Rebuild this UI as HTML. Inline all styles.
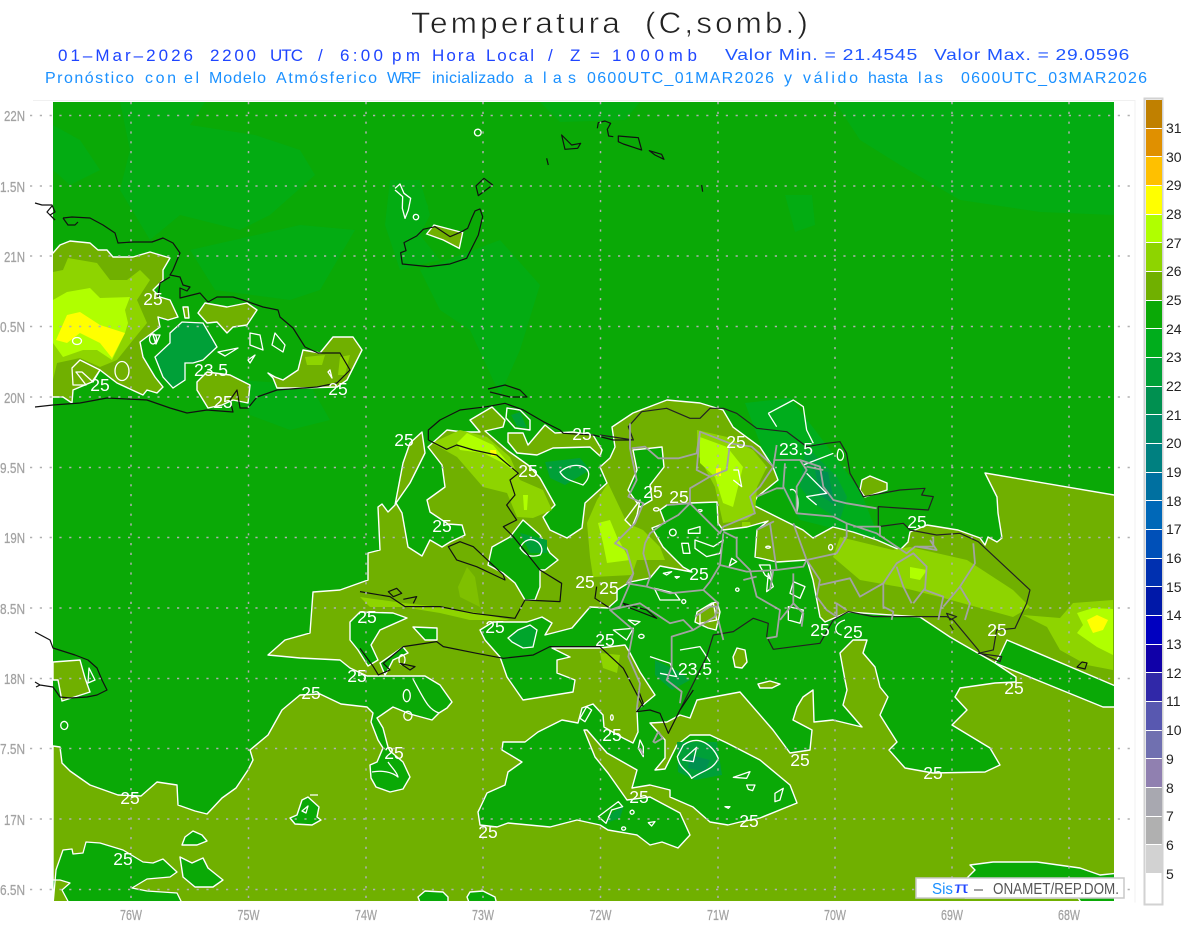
<!DOCTYPE html>
<html>
<head>
<meta charset="utf-8">
<title>Temperatura</title>
<style>
html,body{margin:0;padding:0;background:#fff}
svg{display:block}
text{font-family:"Liberation Sans",sans-serif}
.w{fill:none;stroke:#fff;stroke-width:1.3;stroke-linejoin:round}
.wz{fill:none;stroke:#fff;stroke-width:3.9;stroke-linejoin:round}
.o{fill:#70b000;stroke:#fff;stroke-width:1.4;stroke-linejoin:round}
.g{fill:#0aa906;stroke:#fff;stroke-width:1.4;stroke-linejoin:round}
.k{fill:none;stroke:#111;stroke-width:1.2;stroke-linejoin:round}
.kz{fill:none;stroke:#111;stroke-width:3.6;stroke-linejoin:round}
.gz{fill:none;stroke:#a3a3a3;stroke-width:5.4;stroke-linejoin:round}
.ax{fill:#a2a2a2;font-size:15px;stroke:#a2a2a2;stroke-width:.25px}
.lb{fill:#fff;font-size:17.5px;text-anchor:middle}
.cb{fill:#222;font-size:14px}
.t{font-size:30px;fill:#222;stroke:#fff;stroke-width:.55px;letter-spacing:3px}
.l2{font-size:17px;fill:#1f45ff}
.l2b{font-size:16px;fill:#1f55ff;letter-spacing:.6px}
.l3{font-size:16px;fill:#1a90ff}
</style>
</head>
<body>
<svg width="1200" height="927" viewBox="0 0 1200 927" xmlns="http://www.w3.org/2000/svg">
<defs><clipPath id="m"><rect x="53" y="102" width="1061" height="799"/></clipPath></defs>
<rect width="1200" height="927" fill="#fff"/>

<text class="t" x="411" y="33" textLength="212" lengthAdjust="spacingAndGlyphs">Temperatura</text>
<text class="t" x="645" y="33" textLength="166" lengthAdjust="spacingAndGlyphs">(C,somb.)</text>

<text class="l2" x="58" y="61" textLength="135">01–Mar–2026</text>
<text class="l2" x="210" y="61" textLength="46">2200</text>
<text class="l2" x="270" y="61" textLength="33">UTC</text>
<text class="l2" x="318" y="61">/</text>
<text class="l2" x="340" y="61" textLength="43">6:00</text>
<text class="l2" x="392" y="61" textLength="28">pm</text>
<text class="l2" x="432" y="61" textLength="43">Hora</text>
<text class="l2" x="486" y="61" textLength="48">Local</text>
<text class="l2" x="548" y="61">/</text>
<text class="l2" x="570" y="61">Z</text>
<text class="l2" x="590" y="61">=</text>
<text class="l2" x="612" y="61" textLength="85">1000mb</text>
<text class="l2b" x="725" y="60" textLength="193" lengthAdjust="spacingAndGlyphs">Valor Min. = 21.4545</text>
<text class="l2b" x="934" y="60" textLength="196" lengthAdjust="spacingAndGlyphs">Valor Max. = 29.0596</text>

<text class="l3" x="45" y="83" textLength="89">Pronóstico</text>
<text class="l3" x="145" y="83" textLength="31">con</text>
<text class="l3" x="184" y="83" textLength="15">el</text>
<text class="l3" x="209" y="83" textLength="57">Modelo</text>
<text class="l3" x="276" y="83" textLength="101">Atmósferico</text>
<text class="l3" x="387" y="83" textLength="34">WRF</text>
<text class="l3" x="432" y="83" textLength="82">inicializado</text>
<text class="l3" x="524" y="83">a</text>
<text class="l3" x="543" y="83" textLength="33">las</text>
<text class="l3" x="587" y="83" textLength="187">0600UTC_01MAR2026</text>
<text class="l3" x="784" y="83">y</text>
<text class="l3" x="803" y="83" textLength="55">válido</text>
<text class="l3" x="868" y="83" textLength="40">hasta</text>
<text class="l3" x="918" y="83" textLength="25">las</text>
<text class="l3" x="961" y="83" textLength="186">0600UTC_03MAR2026</text>

<path d="M33,100.5H1135V902.5" fill="none" stroke="#f0f0f0"/>

<g clip-path="url(#m)">
<rect x="53" y="102" width="1061" height="799" fill="#0aa906"/>
<!-- subtle lighter sea patches -->
<g fill="#03ac12">
<path d="M120,102L205,102 190,125 255,135 300,150 315,175 270,215 240,230 180,215 150,240 120,190 130,150Z"/>
<path d="M53,125L80,140 100,170 70,185 53,170Z"/>
<path d="M835,102L1114,102 1114,215 1040,212 960,200 900,165 860,140Z"/>
<path d="M390,180L420,180 430,215 420,235 440,260 400,270 385,225Z"/>
<path d="M420,270L500,240 540,285 520,350 500,395 470,330 440,310Z"/>
<path d="M240,380L310,385 330,420 290,430 250,415Z"/>
<path d="M190,250L300,225 355,230 320,290 290,300 215,290Z"/>
<path d="M640,420L690,400 725,430 700,445 650,445Z"/>
<path d="M785,195L812,195 815,225 795,232Z"/>
<path d="M540,102L640,102 625,120 560,122Z"/>
</g>
<path d="M745,403L790,398 815,430 830,450 860,490 880,540 800,520 770,470Z" fill="#00ad1c"/>

<!-- main olive envelope -->
<path class="o" d="M53,910L53,746 60,747 62,763 70,771 90,785 118,795 141,796 157,782 177,785 178,805 195,811 207,814 222,798 236,788 248,770 253,760 250,750 268,735 282,710 300,695 320,694 341,704 367,707 373,713 371,722 378,740 383,748 377,762 370,765 371,778 376,787 390,792 403,789 410,777 403,762 390,751 388,747 383,728 377,718 393,707 410,714 432,720 439,713 447,708 452,702 440,685 425,676 367,676 350,668 340,660 300,658 268,655 285,640 310,633 313,592 340,590 368,580 368,553 380,550 378,507 382,504 388,512 395,505 403,463 410,443 422,432 425,453 410,483 396,503 402,513 408,547 422,556 430,540 442,547 450,542 465,535 462,525 448,524 430,512 427,500 445,487 442,465 428,447 447,430 463,432 480,432 470,420 492,407 505,420 503,427 485,431 507,450 528,465 540,478 555,505 543,517 550,530 567,538 582,528 585,503 607,483 600,467 610,458 615,447 612,427 633,413 667,400 700,403 723,410 733,427 760,447 773,467 778,480 757,497 753,505 777,517 803,530 813,538 833,527 853,532 877,540 900,550 908,542 910,532 927,525 958,530 980,538 985,545 988,537 997,542 1002,538 998,513 997,497 985,473 1120,496 1120,910Z"/>
<path class="o" d="M508,433L523,433 528,445 545,425 555,433 573,432 593,435 602,450 600,456 590,447 553,448 537,455 517,453 508,442Z"/>
<path class="o" d="M862,480L870,476 887,483 887,490 865,497 860,490Z"/>
<path class="o" d="M53,662L80,660 85,678 90,692 62,701 58,680 53,680Z"/>

<!-- south sea green islands, bottom edge -->
<path class="g" d="M53,905L56,870 57,867 63,850 72,849 73,854 83,853 86,842 100,843 123,850 143,862 153,863 163,859 177,872 170,877 147,879 132,888 147,891 177,893 183,905 70,905 62,890 70,883 60,880 53,880Z" style="stroke-width:1.3"/>
<path class="g" d="M182,845L185,837 193,831 202,835 207,841 197,845Z"/>
<path class="g" d="M180,857L192,863 203,858 208,868 223,880 213,887 195,887 183,877Z"/>
<path class="g" d="M418,897L425,891 443,892 448,897 448,905 421,905Z"/>
<path class="g" d="M467,897L470,892 483,891 495,897 497,905 470,905Z"/>
<path class="g" d="M965,880L975,870 970,865 993,862 1037,862 1080,868 1100,875 1120,873 1120,905 1083,905 1078,898 965,898Z"/>

<!-- Cuba -->
<path class="o" d="M45,255L53,253 60,245 70,241 90,243 98,250 107,250 113,257 133,257 150,252 170,258 163,270 163,280 153,290 160,297 170,300 178,317 168,320 158,317 160,327 140,342 143,357 155,377 163,387 157,393 147,390 143,395 117,383 100,370 92,382 73,390 72,403 63,397 45,397Z"/>
<path fill="#8ed400" d="M53,272L63,270 68,258 97,263 110,280 127,280 140,270 150,280 137,300 147,323 133,340 117,360 100,367 80,358 57,363 53,380Z"/>
<path fill="#b0ff00" d="M53,300L67,292 90,288 100,298 130,297 125,310 128,323 125,333 112,360 97,350 83,350 63,357 53,343Z"/>
<path fill="#ffff00" d="M56,340L67,315 80,312 100,325 125,333 112,358 100,343 80,333 67,343Z"/>
<path class="w" d="M72,368L80,360 100,370 93,382 82,372 76,372 86,385 73,385Z"/>
<ellipse class="w" cx="122" cy="371" rx="7" ry="9.5"/>
<ellipse class="w" cx="77" cy="341" rx="4.5" ry="3.5"/>
<path class="o" d="M198,313L205,303 227,307 247,303 257,310 247,325 233,327 227,333 217,322 207,323Z"/>
<path class="o" d="M197,382L207,372 230,375 250,385 248,403 233,400 222,405 208,408 197,390Z"/>
<path class="o" d="M268,373L275,377 283,380 298,370 303,350 320,353 333,337 353,337 362,350 347,380 337,387 300,388 277,388 273,378Z"/>
<path fill="#8ed400" d="M305,357L325,355 322,365 307,365Z M340,357L350,355 345,375 338,375Z"/>
<path class="o" d="M183,307L188,307 189,318 185,318Z"/>
<path d="M170,333L182,322 203,323 213,340 217,347 203,360 193,363 185,363 185,380 173,388 163,377 155,357 170,343Z" fill="#00a038" stroke="#fff" stroke-width="1.3"/>
<path class="w" d="M153,335L160,335 156,344Z M250,333L260,335 263,350 250,345Z M275,333L285,345 283,352 272,345Z M248,360L255,355 250,363Z M218,352L238,348 225,356Z M330,370L332,378 328,372Z"/>
<ellipse class="w" cx="153" cy="339" rx="3.5" ry="5"/>

<!-- bright land zones -->
<path fill="#8ed400" d="M432,443L460,430 487,437 510,457 520,480 543,490 552,510 533,518 517,517 507,493 483,487 457,457Z"/>
<path fill="#b0ff00" d="M457,443L467,433 493,445 517,473 503,463 483,453 460,450Z M523,495L528,495 527,510 524,510Z"/>
<path fill="#ffff00" d="M490,450L496,450 497,456 491,456Z"/>
<path fill="#8ed400" d="M587,523L597,500 608,483 627,523 643,530 660,547 665,560 637,560 632,575 593,577 590,557Z"/>
<path fill="#b0ff00" d="M598,523L610,520 617,537 630,560 607,563 603,543Z"/>
<path fill="#8ed400" d="M697,430L727,437 753,450 767,467 757,487 755,513 747,520 723,523 715,487 697,453Z"/>
<path fill="#b0ff00" d="M700,437L727,447 743,467 733,507 723,503 715,477 700,463Z"/>
<path fill="#ffff00" d="M716,468L721,468 721,476 716,476Z"/>
<path fill="#8ed400" d="M833,557L840,537 893,550 910,547 967,560 1013,590 1030,607 1013,617 940,597 900,587 860,580Z"/>
<path fill="#b0ff00" d="M910,567L927,570 920,580 910,578Z"/>
<path fill="#8ed400" d="M1023,615L1060,618 1073,603 1113,600 1113,670 1087,665 1060,650 1047,627Z"/>
<path fill="#b0ff00" d="M1077,613L1093,608 1113,609 1113,655 1097,647 1077,633 1083,625Z"/>
<path fill="#ffff00" d="M1087,620L1097,615 1108,620 1103,630 1093,633 1090,627Z"/>
<path fill="#7fc000" d="M458,587L467,567 475,577 480,607 460,597Z"/>
<path fill="#8ed400" d="M360,597L403,603 440,607 473,612 510,620 470,620 440,613 403,607 370,607Z"/>
<path fill="#8ed400" d="M600,653L620,655 617,673 603,668Z M737,607L745,607 747,617 737,617Z M742,522L750,522 752,530 742,530Z"/>

<!-- green pockets -->
<path class="g" d="M633,450L662,447 664,467 650,485 652,500 640,507 628,490 637,470Z"/>
<path class="g" d="M507,408L520,410 530,420 530,430 515,428 506,418Z"/>
<path class="g" d="M1007,640L1125,690 1125,707 1103,707 995,663 1000,655Z"/>
<path class="g" d="M350,622L360,612 393,613 407,618 380,630 371,645 378,660 368,666 358,650 350,640Z"/>
<path class="g" d="M380,663L403,647 408,653 393,660 388,670 385,675Z"/>
<path class="g" d="M413,627L437,628 437,640 425,640Z"/>
<path class="g" d="M488,565L492,547 510,537 523,520 540,535 550,553 558,560 545,570 540,570 540,587 535,600 525,600 515,583 503,573Z"/>
<path class="g" d="M667,505L690,503 717,502 718,523 723,530 747,527 768,521 757,530 755,557 777,562 807,560 813,580 820,617 825,622 848,612 920,617 950,637 995,663 1016,677 1016,682 995,683 960,688 955,697 967,710 952,725 990,748 1000,765 985,772 933,773 905,768 889,750 897,742 880,715 888,697 880,687 875,667 863,653 867,640 853,640 840,653 845,680 847,690 843,705 862,727 833,720 814,722 813,690 803,697 797,707 793,720 812,730 810,750 790,753 773,730 740,692 697,700 690,718 680,715 667,722 650,723 665,740 665,758 655,770 665,769 677,745 690,735 710,735 727,743 760,760 790,785 797,803 760,818 740,822 728,825 710,822 693,807 670,797 670,790 650,785 632,788 637,770 607,753 587,730 584,730 595,757 608,773 627,800 650,797 680,813 690,835 678,848 662,842 650,845 637,835 608,830 600,825 577,820 550,827 508,823 497,827 480,825 478,812 480,808 487,793 505,785 508,772 522,762 502,750 503,742 525,742 538,732 562,720 578,723 582,708 593,704 603,715 604,727 623,738 633,743 638,732 637,710 655,695 640,672 630,653 625,645 600,648 552,648 570,657 557,660 557,673 575,680 573,692 523,700 507,677 500,657 485,640 480,630 493,622 527,622 542,617 552,623 545,635 572,628 590,607 608,608 617,600 617,590 630,582 650,578 660,566 692,572 683,567 663,547 652,528 665,523 660,510Z"/>

<!-- islands of olive inside green -->
<path class="o" d="M733,657L737,648 745,650 747,662 742,668 735,667Z"/>
<path class="o" d="M758,684L770,681 780,684 772,688 760,688Z"/>
<path class="o" d="M712,603L717,602 720,612 716,630 708,628 695,622 697,612Z"/>
<path class="g" d="M290,818L297,815 302,800 308,797 319,807 317,817 321,820 312,825 295,824Z"/>

<!-- darker zones -->
<g fill="#00a038">
<path d="M805,450L813,453 837,477 847,497 840,520 813,503 800,487Z"/>
<path d="M655,660L680,672 690,680 672,690 655,675Z"/>
<path d="M677,742L717,742 722,775 695,780 678,772Z"/>
<path d="M545,462L580,458 590,470 565,485 550,478Z"/>
<path d="M520,533L547,540 547,553 530,553Z"/>
<path d="M609,815L624,805 620,818 606,823Z"/>
<path d="M511,415L520,412 527,428 517,426Z"/>
</g>
<path d="M508,638L518,630 530,625 537,630 533,647 523,648 512,642Z" fill="#00a52c" stroke="#fff" stroke-width="1.3"/>
<g fill="#009050"><path d="M815,470L828,472 835,505 820,495Z"/><path d="M690,755L710,760 705,772 688,768Z"/></g>

<!-- small white loops: scale of zoom 7 -->
<g transform="translate(600,390) scale(.3333)">
<path class="wz" d="M505,70L580,30 610,50 620,120 640,160 M505,70L530,110 M715,180C720,170 740,195 725,210C710,215 710,195 715,180 M610,225L700,190 M570,300C590,290 600,330 590,370 M620,250L680,310 620,320 650,345"/>
<path class="wz" d="M225,420a10,10 0 1 0 1,1Z M265,420L300,410 300,430 265,430Z M245,460L265,460 270,490 250,490Z M285,450L340,470 370,450 360,490 320,500 285,475Z M190,550L215,545 200,555Z M225,560L238,560 230,565Z M415,595a5,5 0 1 0 1,1Z M395,505L410,515 388,528Z M478,525L510,525 515,570 495,555Z M505,550L520,590 500,605 Z M580,575L615,590 600,625 570,610Z M565,650L610,660 600,700 565,690Z M163,595L225,610 240,630 180,630Z M255,630a6,6 0 1 0 1,1Z M300,670L340,640 350,690 300,700Z M85,690L120,695 105,705Z M130,735a8,6 0 1 0 1,1Z M40,720L100,715 80,750Z M150,800L210,820 230,860 180,850 M240,780L300,770 330,815 M305,360a6,3 0 1 0 1,1Z M175,355a8,5 0 1 0 1,1Z M695,465a6,8 0 1 0 1,1Z M735,690C700,700 700,730 725,735 M510,470a7,3 0 1 0 1,1Z M400,240L415,240 425,290 400,270"/>
</g>
<g transform="translate(480,690) scale(.3333)">
<path class="wz" d="M300,85L320,50 335,60 315,95Z M397,75a4,8 0 1 0 1,1Z M480,150L490,170 490,200 475,175Z M610,165C660,130 700,170 715,205 700,240 670,240 635,265 625,240 600,240 592,200Z M608,210L650,172 640,215Z M760,262L810,245 800,265Z M800,285L825,285 818,302 805,298Z M885,335L885,310 910,295 900,330Z M355,380L415,335 428,350 395,360 378,400Z M460,362a6,6 0 1 0 1,1Z M435,412a6,5 0 1 0 1,1Z M505,398L525,395 515,408Z M735,350L750,350 745,355Z"/>
</g>
<path class="w" d="M388,762C392,768 397,772 398,777 392,772 382,770 372,772"/>
<path class="w" d="M413,679C420,692 424,700 428,705 432,710 436,712 439,713"/>
<path class="w" d="M403,655a3,5 0 1 0 1,1Z M408,690a3.5,6 0 1 0 1,1Z M410,712a4,4.5 0 1 0 1,1Z M66,722a3.5,4 0 1 0 1,1Z M89,668L95,680 88,683Z M310,795h8"/>
<path class="w" d="M302,811L308,806 306,813Z M520,548C528,530 548,545 540,555 530,558 525,555 520,548Z M560,472C575,458 600,468 583,485 570,480 565,480 560,472Z"/>
<path class="o" d="M625,520L640,500 637,515 632,527Z"/>

<!-- northern loops -->
<g transform="translate(390,110) scale(.3333)">
<path d="M0,230L30,215 90,235 115,290 100,340 50,335 0,290Z" fill="#03ac12"/>
<path d="M110,372L132,345 218,368 208,415 160,390Z" fill="#70b000" stroke="#fff" stroke-width="4"/>
<path class="wz" d="M15,235L30,222 42,250 62,265 55,300 45,325 37,295 38,260 15,240 M83,315a8,8 0 1 0 1,1Z M270,60a10,10 0 1 0 1,1Z"/>
</g>
</g>

<!-- black coasts -->
<g class="k">
<path d="M35,203L42,205 52,205 55,212 50,215 55,220 M63,218L72,217 90,218 103,225 115,233 118,243 133,242 152,242 163,238 173,243 180,253 173,270 170,275 180,277 183,285 190,287 187,291 180,288 180,298 200,293 208,302 217,297 233,297 243,300 263,307 278,310 280,317 293,328 305,347 318,353 340,353 350,370 337,383 317,387 277,390 257,397 248,408 240,408 237,390 230,400 233,412 207,410 187,413 170,408 147,400 107,398 80,403 53,405 35,407"/>
<path d="M158,297L160,283 170,277 M63,218L68,225 75,225 78,222 M52,206L47,212 55,220"/>
<path d="M35,632L50,640 53,648 75,655 88,660 97,668 102,680 107,690 97,695 87,697 70,698 60,697 53,687 40,685 36,687 M35,682L40,685"/>
<path d="M488,389L505,385 520,390 527,397 510,397 490,392"/>
<path d="M1077,667L1082,662 1087,663 1085,669Z"/>
</g>
<g transform="translate(390,110) scale(.3333)" class="kz">
<path d="M622,55L625,38 645,33 662,40 652,58 656,78 670,80 M515,75L545,105 572,100 563,115 525,118Z M685,78L745,83 755,120 700,102 685,95Z M778,122L815,133 822,148 795,135Z M470,145L475,165 M935,225L938,245 M258,228L282,205 308,225 265,257Z M270,297L278,320 265,375 230,445 180,462 115,470 37,462 32,428 48,422 42,398 80,378 100,358 135,350 180,380 215,365 233,355 245,325 255,303Z"/>
</g>
<g transform="translate(360,390) scale(.3333)" class="kz">
<path d="M205,150L205,120 240,90 300,60 380,50 435,40 490,60 550,95 600,120 610,130 700,135 760,150 815,150 M205,150L260,178 290,165 340,180 410,195 475,250 450,270 465,315 440,345 470,390 430,410 460,440 540,540 605,580 600,635 495,630 465,685 340,670 240,650 135,650 90,620 0,605 M265,470L300,455 340,470 430,555 435,570 350,530 290,510Z M85,605L110,595 125,610 100,620Z M710,590L705,625 750,655 M790,640L860,660 890,685 800,650Z M130,628L170,620 160,640 M850,950L790,835 720,770 570,770 520,795 430,805 350,790 250,770 230,755 130,770 70,820 90,840 55,855 40,830 0,775 M120,820L165,830 150,840Z"/>
</g>
<g transform="translate(600,390) scale(.3333)" class="kz" style="stroke:#222">
<path d="M0,135L100,150 85,110 125,65 200,55 270,85 300,85 330,55 370,55 410,70 470,115 560,125 620,170 680,160 720,155 740,190 750,250 790,320 900,300 975,295 965,315 1000,320 985,360 835,350 835,410 910,400 930,420 1010,435 1080,430 1135,455 1290,600 1280,640 1245,715 1190,720 1180,780 1135,790 1205,800 1200,815 1140,790 1135,780 1060,690 1040,680 960,680 880,680 820,680 745,665 700,690 660,760 520,778 500,740 505,700 460,685 400,725 340,735 320,800 240,960 M1040,670L1070,680 1050,690Z M1050,705L1060,720"/>
</g>
<g transform="translate(480,690) scale(.3333)" class="kz">
<path d="M640,0L600,60 565,130 540,70 510,60 470,65 490,40 475,0"/>
</g>

<!-- gray borders -->
<g transform="translate(600,390) scale(.3333)" class="gz">
<path d="M90,100L90,175 110,270 85,320 130,340 105,400 45,460 80,480 100,550 90,580 60,650 30,660 100,720 85,800 120,880 110,960"/>
<path d="M95,175L135,170 175,205 235,205 290,190 300,125 290,240 330,260 270,295 270,340 200,345"/>
<path d="M300,125L390,160 380,240 355,250 330,260"/>
<path d="M390,160L455,170 500,210 520,230 480,290 450,320 465,370 370,410 360,430 270,340"/>
<path d="M520,230L530,165 M520,210L600,210 660,230 670,290 700,330 740,340 830,355"/>
<path d="M555,220L550,290 590,370 700,380 740,400 740,440 710,490 620,510 580,400"/>
<path d="M600,210L620,240 590,290 590,370 M470,320L530,295 550,295 M620,230L670,240"/>
<path d="M740,400L830,430 920,490 945,470 1000,470 1000,440 M760,410L840,410 840,440"/>
<path d="M620,510L610,530 530,540 510,400 520,395 470,420"/>
<path d="M370,425L410,445 410,500 450,540 470,620 540,660 530,740 500,745"/>
<path d="M620,510L660,570 650,620 680,660 710,680 710,640 740,660"/>
<path d="M660,585L750,565 780,620 850,580 850,650 880,665 875,690"/>
<path d="M850,580L890,520 940,490 980,530 975,600 1030,620 1015,690 M940,640L975,595 M890,530L910,590 935,640"/>
<path d="M1120,460L1125,520 1080,590 1110,640 1095,690 M1080,590L1030,650 M950,470L1010,480 990,450"/>
<path d="M100,550L80,580 140,590 210,610 310,600 330,575 360,525 370,430 M135,460L150,430 190,400 235,375 270,340 M135,460L130,490 150,560 140,590"/>
<path d="M310,600L355,640 345,680 280,720 215,740 215,830 200,870 245,905 240,940 M30,660L120,640 180,680 210,700 250,690 280,720 M355,690L370,750 M360,525L440,545 530,540 M520,540L510,600 M470,560L430,570 M580,550L580,640 610,670 605,710 M540,690L580,640 M285,680L330,650 355,650"/>
</g>
<g transform="translate(480,690) scale(.3333)" class="gz"><path d="M520,155L535,125 548,145 525,158Z M480,175L490,195"/></g>

<!-- graticule -->
<g fill="none" stroke="#b0b0b0" stroke-width="1.5" stroke-dasharray="2.2 7.6">
<path d="M30,115.5H1135M30,186H1135M30,256H1135M30,326.5H1135M30,397H1135M30,467.5H1135M30,537.5H1135M30,608H1135M30,678.5H1135M30,748.5H1135M30,819H1135M30,889.5H1135"/>
<path d="M131,102V905M248.5,102V905M366,102V905M483,102V905M600.5,102V905M718,102V905M835,102V905M952,102V905M1069,102V905"/>
</g>

<!-- contour labels -->
<g class="lb">
<text x="153" y="305">25</text><text x="100" y="391">25</text><text x="223" y="408">25</text><text x="338" y="395">25</text>
<text x="211" y="376">23.5</text><text x="404" y="446">25</text><text x="528" y="477">25</text><text x="442" y="532">25</text>
<text x="582" y="440">25</text><text x="367" y="623">25</text><text x="495" y="633">25</text><text x="605" y="646">25</text>
<text x="585" y="588">25</text><text x="609" y="594">25</text><text x="653" y="498">25</text><text x="679" y="503">25</text>
<text x="736" y="448">25</text><text x="796" y="455">23.5</text><text x="699" y="580">25</text><text x="917" y="528">25</text>
<text x="820" y="636">25</text><text x="853" y="638">25</text><text x="695" y="675">23.5</text><text x="997" y="636">25</text>
<text x="1014" y="694">25</text><text x="933" y="779">25</text><text x="800" y="766">25</text><text x="749" y="827">25</text>
<text x="639" y="803">25</text><text x="612" y="741">25</text><text x="488" y="838">25</text><text x="394" y="759">25</text>
<text x="311" y="699">25</text><text x="357" y="682">25</text><text x="130" y="804">25</text><text x="123" y="865">25</text>
</g>

<!-- axis labels -->
<g class="ax" text-anchor="end">
<text x="25" y="121" textLength="21" lengthAdjust="spacingAndGlyphs">22N</text><text x="25" y="192" textLength="25" lengthAdjust="spacingAndGlyphs">1.5N</text><text x="25" y="262" textLength="21" lengthAdjust="spacingAndGlyphs">21N</text><text x="25" y="332" textLength="25" lengthAdjust="spacingAndGlyphs">0.5N</text>
<text x="25" y="403" textLength="21" lengthAdjust="spacingAndGlyphs">20N</text><text x="25" y="473" textLength="25" lengthAdjust="spacingAndGlyphs">9.5N</text><text x="25" y="543" textLength="21" lengthAdjust="spacingAndGlyphs">19N</text><text x="25" y="614" textLength="25" lengthAdjust="spacingAndGlyphs">8.5N</text>
<text x="25" y="684" textLength="21" lengthAdjust="spacingAndGlyphs">18N</text><text x="25" y="754" textLength="25" lengthAdjust="spacingAndGlyphs">7.5N</text><text x="25" y="825" textLength="21" lengthAdjust="spacingAndGlyphs">17N</text><text x="25" y="895" textLength="25" lengthAdjust="spacingAndGlyphs">6.5N</text>
</g>
<g class="ax" text-anchor="middle">
<text x="131" y="920" textLength="22" lengthAdjust="spacingAndGlyphs">76W</text><text x="248.5" y="920" textLength="22" lengthAdjust="spacingAndGlyphs">75W</text><text x="366" y="920" textLength="22" lengthAdjust="spacingAndGlyphs">74W</text><text x="483" y="920" textLength="22" lengthAdjust="spacingAndGlyphs">73W</text>
<text x="600.5" y="920" textLength="22" lengthAdjust="spacingAndGlyphs">72W</text><text x="718" y="920" textLength="22" lengthAdjust="spacingAndGlyphs">71W</text><text x="835" y="920" textLength="22" lengthAdjust="spacingAndGlyphs">70W</text><text x="952" y="920" textLength="22" lengthAdjust="spacingAndGlyphs">69W</text><text x="1069" y="920" textLength="22" lengthAdjust="spacingAndGlyphs">68W</text>
</g>

<!-- color bar -->
<rect x="1144.5" y="98.5" width="18" height="806" fill="#fff" stroke="#d2d2d2" stroke-width="2"/>
<g>
<rect x="1146" y="100" width="16" height="28" fill="#c08000"/>
<rect x="1146" y="129" width="16" height="27" fill="#e09000"/>
<rect x="1146" y="157" width="16" height="28" fill="#ffc000"/>
<rect x="1146" y="186" width="16" height="28" fill="#ffff00"/>
<rect x="1146" y="215" width="16" height="27" fill="#b0ff00"/>
<rect x="1146" y="243" width="16" height="28" fill="#8ed400"/>
<rect x="1146" y="272" width="16" height="28" fill="#70b000"/>
<rect x="1146" y="301" width="16" height="27" fill="#0aa906"/>
<rect x="1146" y="329" width="16" height="28" fill="#00ad1c"/>
<rect x="1146" y="358" width="16" height="28" fill="#00a038"/>
<rect x="1146" y="387" width="16" height="27" fill="#009050"/>
<rect x="1146" y="415" width="16" height="28" fill="#008a68"/>
<rect x="1146" y="444" width="16" height="28" fill="#008080"/>
<rect x="1146" y="473" width="16" height="27" fill="#0070a0"/>
<rect x="1146" y="501" width="16" height="28" fill="#0068b8"/>
<rect x="1146" y="530" width="16" height="28" fill="#0050b8"/>
<rect x="1146" y="559" width="16" height="27" fill="#0030b0"/>
<rect x="1146" y="587" width="16" height="28" fill="#0018a8"/>
<rect x="1146" y="616" width="16" height="28" fill="#0000c0"/>
<rect x="1146" y="645" width="16" height="27" fill="#1000a8"/>
<rect x="1146" y="673" width="16" height="28" fill="#3028a8"/>
<rect x="1146" y="702" width="16" height="28" fill="#5858b0"/>
<rect x="1146" y="731" width="16" height="27" fill="#7070b0"/>
<rect x="1146" y="759" width="16" height="28" fill="#9080b0"/>
<rect x="1146" y="788" width="16" height="28" fill="#a8a8b0"/>
<rect x="1146" y="817" width="16" height="27" fill="#b0b0b0"/>
<rect x="1146" y="845" width="16" height="28" fill="#d2d2d2"/>
</g>
<g class="cb">
<text x="1166" y="133">31</text><text x="1166" y="162">30</text><text x="1166" y="190">29</text><text x="1166" y="219">28</text>
<text x="1166" y="248">27</text><text x="1166" y="276">26</text><text x="1166" y="305">25</text><text x="1166" y="334">24</text>
<text x="1166" y="362">23</text><text x="1166" y="391">22</text><text x="1166" y="420">21</text><text x="1166" y="448">20</text>
<text x="1166" y="477">19</text><text x="1166" y="506">18</text><text x="1166" y="534">17</text><text x="1166" y="563">16</text>
<text x="1166" y="592">15</text><text x="1166" y="620">14</text><text x="1166" y="649">13</text><text x="1166" y="678">12</text>
<text x="1166" y="706">11</text><text x="1166" y="735">10</text><text x="1166" y="764">9</text><text x="1166" y="793">8</text>
<text x="1166" y="821">7</text><text x="1166" y="850">6</text><text x="1166" y="879">5</text>
</g>

<!-- credit -->
<rect x="916" y="878" width="208" height="20" fill="#fff" stroke="#c8c8c8" stroke-width="1.5"/>
<text x="932" y="894" font-size="15.5" fill="#1a90ff" textLength="21" lengthAdjust="spacingAndGlyphs">Sis</text>
<text x="954" y="893" font-size="16" fill="#1f45ff" textLength="15" lengthAdjust="spacingAndGlyphs">π</text>
<text x="974" y="894" font-size="15" fill="#444" textLength="9" lengthAdjust="spacingAndGlyphs">–</text>
<text x="993" y="894" font-size="15.5" fill="#555" textLength="126" lengthAdjust="spacingAndGlyphs">ONAMET/REP.DOM.</text>
</svg>
</body>
</html>
